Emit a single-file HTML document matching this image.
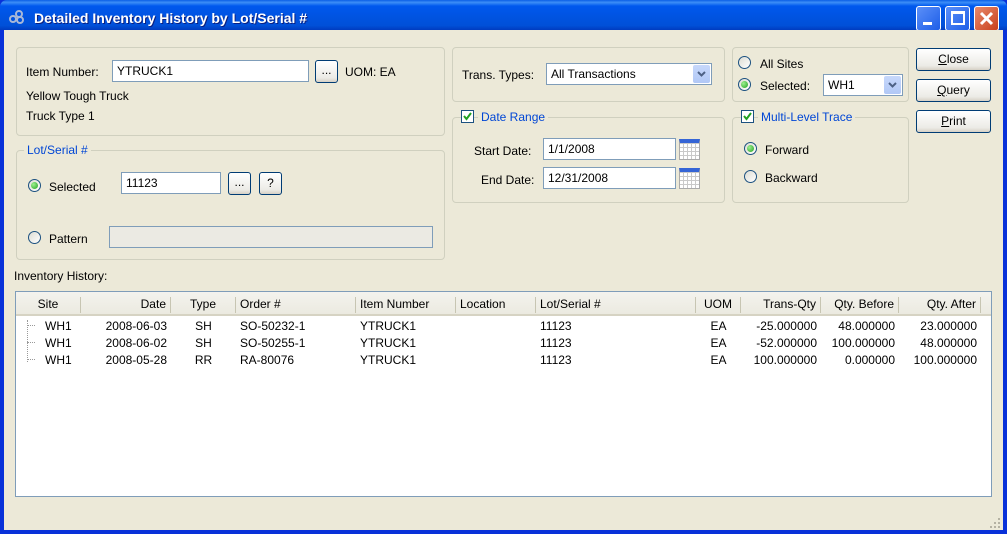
<!DOCTYPE html>
<html><head><style>
*{box-sizing:border-box;margin:0;padding:0}
body{width:1007px;height:534px;overflow:hidden;font-family:"Liberation Sans",sans-serif;font-size:12px;color:#000;background:#0831d9;position:relative}
.a{position:absolute}
#title{left:0;top:0;width:1007px;height:30px;border-radius:7px 7px 0 0;background:linear-gradient(#0a5fe6 0%,#3d8ef7 8%,#0058ee 20%,#0054e3 50%,#0050d8 85%,#003cc0 100%)}
#title .t{left:34px;top:10px;color:#fff;font-weight:bold;font-size:14px;text-shadow:1px 1px #0a1f80}
#client{left:4px;top:30px;width:999px;height:500px;background:#ece9d8}
.grp{position:absolute;border:1px solid #d0d0bf;border-radius:4px}
.lg{position:absolute;background:#ece9d8;color:#0046d5;padding:0 3px}
.in{position:absolute;background:#fff;border:1px solid #7f9db9;height:22px;padding:3px 4px}
.btn{position:absolute;border:1px solid #003c74;border-radius:3px;background:linear-gradient(#fff,#ecebe6 80%,#d6d0c5);text-align:center;line-height:21px;height:23px}
.rad{position:absolute;width:13px;height:13px;border:1px solid #1c5180;border-radius:50%;background:linear-gradient(135deg,#dcdcd3,#fff)}
.rad.on::after{content:"";position:absolute;left:2px;top:2px;width:7px;height:7px;border-radius:50%;background:radial-gradient(circle at 35% 35%,#9ef08f,#21a121)}
.chk{position:absolute;width:13px;height:13px;border:1px solid #1c5180;background:#fff}
.cmb{position:absolute;width:17px;height:18px;top:1px;right:1px;border-radius:2px;background:linear-gradient(#c7d8fb,#b1c8f6)}
.cal{position:absolute;width:21px;height:21px;border:1px solid #aaa;border-top:4px solid #3565d6;background:
repeating-linear-gradient(90deg,transparent 0 3px,#c9c9c9 3px 4px),repeating-linear-gradient(0deg,#fff 0 3px,#c9c9c9 3px 4px)}
#tbl{left:11px;top:261px;width:977px;height:206px;border:1px solid #7f9db9;background:#fff}
#hdr{left:0;top:0;width:975px;height:24px;background:linear-gradient(#f4f3ee,#ebeae0);border-bottom:2px solid #d6d3c3}
.h{position:absolute;top:5px;height:16px;border-right:1px solid #c7c5b2;padding:0 4px}
.c{position:absolute;padding:0 4px}
u{text-decoration:underline}
</style></head><body>
<div id="title" class="a">
<svg class="a" style="left:8px;top:9px" width="18" height="16"><circle cx="5" cy="10" r="3" fill="none" stroke="#a8b8d8" stroke-width="2"/><circle cx="11" cy="5" r="3" fill="none" stroke="#a8b8d8" stroke-width="2"/><circle cx="12" cy="11" r="3" fill="none" stroke="#a8b8d8" stroke-width="2"/></svg>
<div class="a t">Detailed Inventory History by Lot/Serial #</div>
<div class="a" style="left:916px;top:6px;width:25px;height:25px;border:1px solid #fff;border-radius:3px;background:linear-gradient(135deg,#5b8ff8,#1d5ee8)"><div class="a" style="left:6px;top:15px;width:9px;height:3px;background:#fff"></div></div>
<div class="a" style="left:945px;top:6px;width:25px;height:25px;border:1px solid #fff;border-radius:3px;background:linear-gradient(135deg,#5b8ff8,#1d5ee8)"><div class="a" style="left:5px;top:4px;width:14px;height:14px;border:2px solid #fff;border-top-width:3px"></div></div>
<div class="a" style="left:974px;top:6px;width:25px;height:25px;border:1px solid #fff;border-radius:3px;background:linear-gradient(135deg,#e88a6b,#c9401c)"><svg class="a" style="left:4px;top:4px" width="15" height="15"><path d="M2 2L13 13M13 2L2 13" stroke="#fff" stroke-width="3"/></svg></div>
</div>
<div id="client" class="a">
<div class="grp" style="left:12px;top:17px;width:429px;height:89px"></div>
<div class="a" style="left:22px;top:35px">Item Number:</div>
<div class="in" style="left:108px;top:30px;width:197px">YTRUCK1</div>
<div class="btn" style="left:311px;top:30px;width:23px;line-height:18px">...</div>
<div class="a" style="left:341px;top:35px">UOM: EA</div>
<div class="a" style="left:22px;top:59px">Yellow Tough Truck</div>
<div class="a" style="left:22px;top:79px">Truck Type 1</div>
<div class="grp" style="left:12px;top:120px;width:429px;height:110px"></div>
<div class="lg" style="left:20px;top:113px">Lot/Serial #</div>
<div class="rad on" style="left:24px;top:149px"></div>
<div class="a" style="left:45px;top:150px">Selected</div>
<div class="in" style="left:117px;top:142px;width:100px">11123</div>
<div class="btn" style="left:224px;top:142px;width:23px;line-height:18px">...</div>
<div class="btn" style="left:255px;top:142px;width:23px">?</div>
<div class="rad" style="left:24px;top:201px"></div>
<div class="a" style="left:45px;top:202px">Pattern</div>
<div class="a" style="left:105px;top:196px;width:324px;height:22px;border:1px solid #7f9db9;background:#ebeae3"></div>
<div class="grp" style="left:448px;top:17px;width:273px;height:55px"></div>
<div class="a" style="left:458px;top:38px">Trans. Types:</div>
<div class="in" style="left:542px;top:33px;width:166px">All Transactions<div class="cmb"><svg width="17" height="18"><path d="M5 7l3.5 3.5L12 7" fill="none" stroke="#4d6185" stroke-width="2"/></svg></div></div>
<div class="grp" style="left:448px;top:87px;width:273px;height:86px"></div>
<div class="lg" style="left:474px;top:80px">Date Range</div>
<div class="chk" style="left:457px;top:80px"><svg width="11" height="11" style="position:absolute;left:0;top:0"><path d="M2 5l2.5 3L9 2" fill="none" stroke="#21a121" stroke-width="2"/></svg></div>
<div class="a" style="left:470px;top:114px">Start Date:</div>
<div class="in" style="left:539px;top:108px;width:133px">1/1/2008</div>
<div class="cal" style="left:675px;top:109px"></div>
<div class="a" style="left:477px;top:143px">End Date:</div>
<div class="in" style="left:539px;top:137px;width:133px">12/31/2008</div>
<div class="cal" style="left:675px;top:138px"></div>
<div class="grp" style="left:728px;top:17px;width:177px;height:55px"></div>
<div class="rad" style="left:734px;top:26px"></div>
<div class="a" style="left:756px;top:27px">All Sites</div>
<div class="rad on" style="left:734px;top:48px"></div>
<div class="a" style="left:756px;top:49px">Selected:</div>
<div class="in" style="left:819px;top:44px;width:80px">WH1<div class="cmb"><svg width="17" height="18"><path d="M5 7l3.5 3.5L12 7" fill="none" stroke="#4d6185" stroke-width="2"/></svg></div></div>
<div class="grp" style="left:728px;top:87px;width:177px;height:86px"></div>
<div class="lg" style="left:754px;top:80px">Multi-Level Trace</div>
<div class="chk" style="left:737px;top:80px"><svg width="11" height="11" style="position:absolute;left:0;top:0"><path d="M2 5l2.5 3L9 2" fill="none" stroke="#21a121" stroke-width="2"/></svg></div>
<div class="rad on" style="left:740px;top:112px"></div>
<div class="a" style="left:761px;top:113px">Forward</div>
<div class="rad" style="left:740px;top:140px"></div>
<div class="a" style="left:761px;top:141px">Backward</div>
<div class="btn" style="left:912px;top:18px;width:75px"><u>C</u>lose</div>
<div class="btn" style="left:912px;top:49px;width:75px"><u>Q</u>uery</div>
<div class="btn" style="left:912px;top:80px;width:75px"><u>P</u>rint</div>
<div class="a" style="left:10px;top:239px">Inventory History:</div>
<div id="tbl" class="a">
<div id="hdr" class="a">
<div class="h" style="left:0;width:65px;text-align:center">Site</div>
<div class="h" style="left:65px;width:90px;text-align:right">Date</div>
<div class="h" style="left:155px;width:65px;text-align:center">Type</div>
<div class="h" style="left:220px;width:120px">Order #</div>
<div class="h" style="left:340px;width:100px">Item Number</div>
<div class="h" style="left:440px;width:80px">Location</div>
<div class="h" style="left:520px;width:160px">Lot/Serial #</div>
<div class="h" style="left:680px;width:45px;text-align:center">UOM</div>
<div class="h" style="left:725px;width:80px;text-align:right">Trans-Qty</div>
<div class="h" style="left:805px;width:78px;text-align:right">Qty. Before</div>
<div class="h" style="left:883px;width:82px;text-align:right">Qty. After</div>
</div>
<div class="a" style="left:11px;top:28px;height:42px;border-left:1px dotted #999"></div>
<div class="a" style="left:11px;top:33px;width:8px;border-top:1px dotted #999"></div>
<div class="a" style="left:11px;top:50px;width:8px;border-top:1px dotted #999"></div>
<div class="a" style="left:11px;top:67px;width:8px;border-top:1px dotted #999"></div>
<div class="a" style="left:0;top:26px;width:975px;line-height:17px">
<div class="c" style="left:25px">WH1<br>WH1<br>WH1</div>
<div class="c" style="left:65px;width:90px;text-align:right">2008-06-03<br>2008-06-02<br>2008-05-28</div>
<div class="c" style="left:155px;width:65px;text-align:center">SH<br>SH<br>RR</div>
<div class="c" style="left:220px">SO-50232-1<br>SO-50255-1<br>RA-80076</div>
<div class="c" style="left:340px">YTRUCK1<br>YTRUCK1<br>YTRUCK1</div>
<div class="c" style="left:520px">11123<br>11123<br>11123</div>
<div class="c" style="left:680px;width:45px;text-align:center">EA<br>EA<br>EA</div>
<div class="c" style="left:725px;width:80px;text-align:right">-25.000000<br>-52.000000<br>100.000000</div>
<div class="c" style="left:805px;width:78px;text-align:right">48.000000<br>100.000000<br>0.000000</div>
<div class="c" style="left:883px;width:82px;text-align:right">23.000000<br>48.000000<br>100.000000</div>
</div>
</div>
<svg class="a" style="left:986px;top:488px" width="12" height="12"><g fill="#b5b2a3"><rect x="8" y="0" width="2" height="2"/><rect x="4" y="4" width="2" height="2"/><rect x="8" y="4" width="2" height="2"/><rect x="0" y="8" width="2" height="2"/><rect x="4" y="8" width="2" height="2"/><rect x="8" y="8" width="2" height="2"/></g></svg>
</div>
</body></html>
